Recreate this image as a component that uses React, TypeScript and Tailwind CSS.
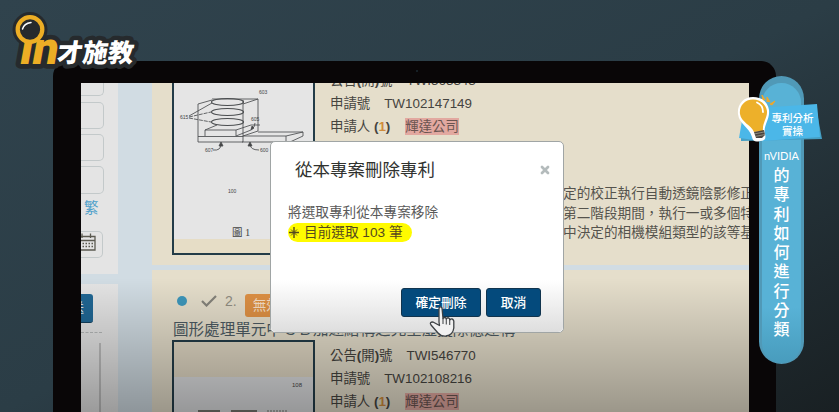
import type { ReactNode } from "react";
import { X } from "lucide-react";

const ribbonChars = ["的", "專", "利", "如", "何", "進", "行", "分", "類"];

function Row({ label, children }: { label: ReactNode; children: ReactNode }) {
  return (
    <div className="flex h-[23px] items-center whitespace-nowrap text-[13.4px] leading-none text-[#45443f]">
      <span>{label}</span>
      <span className="ml-[14px]">{children}</span>
    </div>
  );
}

function Applicant() {
  return (
    <Row
      label={
        <>
          申請人 <b>(<span className="text-[#d08c3c]">1</span>)</b>
        </>
      }
    >
      <span className="ml-px bg-[#e2a8a0] py-px text-[#6b5551]">輝達公司</span>
    </Row>
  );
}

function PatentFigure() {
  return (
    <svg width="138" height="156" viewBox="174 83 138 156" fill="none" stroke="#4a4d4f" strokeWidth="0.85">
      <path d="M198 104V142H243V100M198 104L212 100M212 99H258L243 104M258 99V131L243 136M198 136.500H243M205 136V130H236V136M205 130L217 125M236 130L251 125H260M236 136L251 130M242 142H290L303 136V132H258M243 136H286L303 132M286 136V142" />
      <g strokeWidth="1.100">
        <ellipse cx="227.500" cy="102" rx="16" ry="3.500" />
        <ellipse cx="227.500" cy="112" rx="16" ry="3.500" />
        <ellipse cx="227.500" cy="122" rx="16" ry="3.500" />
      </g>
      <path d="M189 116L212 103" />
      <path d="M189 117L211 112M189 118L211 122" strokeDasharray="4 1" />
      <path d="M213 150Q221 151 221 144M259 150Q250 150 250 144M255 123Q255 128 251 129" />
      <path d="M221 142L219 146H223ZM250 142L248 146H252ZM251 130L252 126L254 128Z" fill="#444" />
      <g fill="#444" stroke="none" fontFamily="Liberation Sans, sans-serif" fontSize="5">
        <text x="180" y="119">615</text>
        <text x="205" y="151.500">607</text>
        <text x="260" y="151.500">600</text>
        <text x="251" y="121">605</text>
        <text x="259" y="94">603</text>
        <text x="228" y="193">100</text>
      </g>
      <text x="232" y="236" fill="#444" stroke="none" fontFamily="Liberation Serif, Noto Sans CJK TC, serif" fontSize="10.500">圖 1</text>
    </svg>
  );
}

function SideBar() {
  return (
    <div className="h-[329px] w-[37px] shrink-0 overflow-hidden bg-[#d1dce3]">
      <div className="h-[191px] bg-[#e4e4e4]">
        <div className="h-[13px] w-[23px] rounded-br-[5px] border-r border-b border-[#c3c9ca]" />
        <div className="mt-[6px] h-[27px] w-[23px] rounded-r-[5px] border border-l-0 border-[#c3c9ca]" />
        <div className="mt-[5px] h-[27px] w-[23px] rounded-r-[5px] border border-l-0 border-[#c3c9ca]" />
        <div className="mt-[5px] h-[28px] w-[23px] rounded-r-[5px] border border-l-0 border-[#c3c9ca]" />
        <div className="mt-[6px] ml-[3px] h-[16px] text-[14.500px] leading-[16px] text-[#4c9fca]">繁</div>
        <div className="mt-[15px] h-[27px] w-[22px] rounded-r-[5px] border border-l-0 border-[#c3c9ca]">
          <svg width="15" height="20" viewBox="0 0 15 20" fill="none" stroke="#5b5a50" strokeWidth="1.300">
            <path d="M0 4.500H14V18H0M0 8.500H14M9.500 1.500V6M1 1.500V6" />
            <path d="M1.500 11.500H12M1.500 14.500H12" strokeWidth="1.500" strokeDasharray="1.500 1.500" />
          </svg>
        </div>
      </div>
      <div className="mt-[10px] h-[128px] bg-[#e4e4e4] pt-[10px]">
        <div className="h-[29px] w-[12px] overflow-hidden rounded-r-[3px] border-b border-[#123f5c] bg-[#206794] pt-[7px] text-[13px] leading-[14px] text-[#d8e5ec]">
          <span className="-ml-[10px]">送</span>
        </div>
        <div className="mt-[9px] w-[21px] border-t border-dashed border-[#b5b8b8]" />
        <div className="mt-[10px] ml-[18px] h-[70px] w-[2px] bg-[#bcbcbc]" />
      </div>
    </div>
  );
}

function Results() {
  return (
    <div className="ml-[34px] w-[597px] shrink-0">
      <section className="flex h-[182px] overflow-hidden bg-[#e5decb] pl-[20px]">
        <div className="h-[172px] w-[143px] shrink-0 overflow-hidden border-2 border-t-0 border-[#233c48] bg-[#e6ddc6]">
          <div className="h-[156px] bg-[#e5e5e5]">
            <PatentFigure />
          </div>
        </div>
        <div className="-mt-[14px] ml-[15px]">
          <Row label={<>公告<b>(</b>開<b>)</b>號</>}>TWI563343</Row>
          <Row label="申請號">TW102147149</Row>
          <Applicant />
          <div className="mt-[46px] ml-[233px] text-[13.650px] leading-[19.500px] whitespace-nowrap text-[#55534d]">
            <p>定的校正執行自動透鏡陰影修正</p>
            <p>第二階段期間，執行一或多個特</p>
            <p>中決定的相機模組類型的該等基</p>
          </div>
        </div>
      </section>
      <section className="mt-[5px] h-[142px] overflow-hidden bg-[#e5decb] pl-[20px]">
        <div className="flex h-[49px] items-end">
          <span className="mb-[13px] ml-[5px] h-[10px] w-[10px] rounded-full bg-[#3d97bb]" />
          <svg className="mb-[12px] ml-[14px]" width="16" height="12" viewBox="0 0 16 12" fill="none" stroke="#85837b" strokeWidth="2.200">
            <path d="M1 6L5.500 10.500L15 1" />
          </svg>
          <span className="mb-[9px] ml-[8px] text-[14px] leading-[18px] text-[#918d82]">2.</span>
          <span className="mb-[2px] ml-[8px] h-[23px] w-[90px] rounded-[3px] bg-[#df9144] pl-[8px] text-[13.600px] leading-[23px] text-[#f8e0c8]">無效</span>
        </div>
        <div className="ml-px h-[21px] text-[15.550px] leading-[21px] whitespace-nowrap text-[#4c5a62]">
          圖形處理單元中ＣＢ加速結構之完全虛擬除憶建構
        </div>
        <div className="flex">
          <div className="h-[100px] w-[143px] shrink-0 border-2 border-[#233c48] bg-[#e1d8c4]">
            <div className="mt-[35px] h-[70px] bg-[#dedfe1]">
              <svg width="138" height="40" fill="none" stroke="#77766f">
                <text x="118" y="10" fill="#444" stroke="none" fontSize="6">108</text>
                <path d="M24 34H46M57 34H83" strokeWidth="2" />
                <path d="M93 34H114" strokeWidth="1" strokeDasharray="2 1" />
              </svg>
            </div>
          </div>
          <div className="mt-[4px] ml-[15px]">
            <Row label={<>公告<b>(</b>開<b>)</b>號</>}>TWI546770</Row>
            <Row label="申請號">TW102108216</Row>
            <Applicant />
          </div>
        </div>
      </section>
    </div>
  );
}

function Dialog() {
  return (
    <div className="absolute top-[141px] left-[270px] flex h-[192px] w-[294px] flex-col rounded-[5px] border border-[#a0a5a5] bg-white text-[#333]">
      <div className="flex items-center justify-between pt-[17px] pr-[12px] pl-[24px]">
        <h1 className="text-[17.500px] leading-[22px] text-[#30322f]">從本專案刪除專利</h1>
        <X size={12} strokeWidth={5.5} color="#b4bbbc" />
      </div>
      <div className="mt-[22px] ml-[17px] text-[13.650px] leading-[20px] text-[#5a5a5a]">
        <p>將選取專利從本專案移除</p>
        <p className="flex h-[19px] w-[124px] items-center rounded-full bg-[#fffb00] leading-[19px] whitespace-nowrap text-[#55491e]">
          <svg width="12" height="13" viewBox="0 0 12 13" stroke="#55491e" fill="none" className="mr-[4px]">
            <path d="M6 1V12M1 6.500H11" strokeWidth="1.400" />
            <path d="M3 3.500L9 9.500M9 3.500L3 9.500" strokeWidth="0.900" />
          </svg>
          目前選取 103 筆
        </p>
      </div>
      <div className="mt-auto flex h-[52px] justify-end gap-[5px] rounded-b-[5px] bg-linear-to-b from-white to-[#dedede] pt-[8px] pr-[22px]">
        <button className="h-[29px] w-[80px] rounded-[3px] border border-[#11344e] bg-[#044a7c] text-[12.800px] leading-[27px] font-medium text-white">確定刪除</button>
        <button className="h-[29px] w-[55px] rounded-[3px] border border-[#11344e] bg-[#044a7c] text-[12.800px] leading-[27px] font-medium text-white">取消</button>
      </div>
    </div>
  );
}

function Hand() {
  return (
    <svg className="absolute top-[304px] left-[428px]" width="28" height="34" viewBox="0 0 28 34">
      <path
        d="M11 18V4.500Q12 1.500 14 4L15 14.500Q16.500 12.500 18.300 14.500V15Q20 12.500 21.700 15V16Q24.500 13.500 25.800 17V24Q25 31 18 32Q13 32.500 10 29L3 21Q1 18 5 18L11.500 21.500Z"
        fill="#f1f1f1"
        stroke="#3d4144"
        strokeWidth="1.300"
        strokeLinejoin="round"
      />
      <path d="M15 14V20M18.300 15V20.500M21.700 16V21" stroke="#4a4e50" strokeWidth="1.100" />
    </svg>
  );
}

function Logo() {
  return (
    <svg className="absolute top-0 left-0" width="150" height="80" viewBox="0 0 150 80">
      <g stroke="#262a2d" strokeLinejoin="round" fill="#262a2d">
        <circle cx="30" cy="29.500" r="14" strokeWidth="7" />
        <text transform="translate(20.500 64) scale(1.1 1.06)" strokeWidth="9" fontFamily="Roboto, sans-serif" fontSize="43" fontWeight="900" fontStyle="italic">in</text>
        <text transform="translate(56 61.500) skewX(-8)" strokeWidth="9" fontFamily="Noto Sans CJK TC, sans-serif" fontSize="25.500" fontWeight="900">才施教</text>
      </g>
      <text transform="translate(20.500 64) scale(1.1 1.06)" fill="#edae25" fontFamily="Roboto, sans-serif" fontSize="43" fontWeight="900" fontStyle="italic">in</text>
      <circle cx="30" cy="29.500" r="12.300" fill="#262a2d" stroke="#edae25" strokeWidth="4.300" />
      <path d="M22.500 29Q24 23.500 31 22.500" stroke="#fff" strokeWidth="1.500" fill="none" strokeLinecap="round" />
      <text transform="translate(56 61.500) skewX(-8)" fill="#fff" fontFamily="Noto Sans CJK TC, sans-serif" fontSize="25.500" fontWeight="900">才施教</text>
    </svg>
  );
}

function Ribbon() {
  return (
    <div className="absolute top-[76px] left-[759px] h-[288px] w-[45px] rounded-full bg-[#5099b7] px-[3px] pt-[7px]">
      <div className="flex h-[280px] flex-col items-center rounded-full bg-linear-to-b from-[#58b2d6] from-80% to-[#489cbd] pt-[67px] text-white">
        <span className="text-[11px] leading-[12px]" style={{ fontFamily: "Lato, sans-serif" }}>nVIDIA</span>
        <div className="mt-[4px] flex flex-col items-center text-[16px] font-medium">
          {ribbonChars.map((c) => (
            <span key={c} className="h-[19.250px] leading-[19.250px]">{c}</span>
          ))}
        </div>
      </div>
      <svg className="absolute top-[11px] -left-[23px]" width="90" height="60" viewBox="736 87 90 60">
        <path d="M741 133L816 107L822 139L741 141Z" fill="#459fc4" />
        <path d="M744 109L817 104L820 137L762 141L739 138Z" fill="#4bb7e8" />
        <path d="M763 101L762 95L765 100M767 102L767 97L770 102M770 104L775 101L772 105Z" fill="#eda72e" stroke="#eda72e" strokeWidth="1" />
        <path d="M753 97C743 97 737 105 738 114C739 124 749 127 752 137Q753 143 760 141Q767 141 765 134C763 125 770 120 769 110C768 102 762 97 753 97Z" fill="#fff" />
        <path d="M753 99.500C744 99.500 739 107 740 114C741 122 751 125 754 132L763 131C762 123 767.500 118 767 111C766 104 760 99.500 753 99.500Z" fill="#edb02a" />
        <path d="M754 132L764 130L765 135L762 138L756 138Z" fill="#4a4540" />
        <path d="M754 134L764 132M755 136.500L765 134.500" stroke="#bba" strokeWidth="0.600" />
        <path d="M757 102.500Q763 105 763 112" stroke="#fff" strokeWidth="1.800" fill="none" strokeLinecap="round" />
        <g fill="#fff" fontFamily="Noto Sans CJK TC, sans-serif" fontSize="10.500" fontWeight="500" textAnchor="middle">
          <text x="792.500" y="121.500">專利分析</text>
          <text x="792.500" y="134.500">實操</text>
        </g>
      </svg>
    </div>
  );
}

export default function App() {
  return (
    <div
      className="relative h-[412px] w-[839px] overflow-hidden bg-linear-to-br from-[#30434d] via-[#2b3d46] via-50% to-[#192023] pt-[61px] pl-[53px]"
      style={{ fontFamily: '"Liberation Sans", "Noto Sans CJK TC", sans-serif' }}
    >
      <div className="h-[351px] w-[723px] rounded-t-[15px] bg-[#090607] pt-[22px] pl-[28px]">
        <div className="flex h-[329px] w-[668px] overflow-hidden bg-[#d1dce3]">
          <SideBar />
          <Results />
        </div>
      </div>
      <div className="absolute top-[278px] left-[81px] h-[134px] w-[668px] bg-linear-to-b from-transparent to-black/32" />
      <span className="absolute top-[70px] left-[416px] h-[2px] w-[2px] rounded-full bg-[#1b2930]" />
      <Dialog />
      <Hand />
      <Logo />
      <Ribbon />
    </div>
  );
}
